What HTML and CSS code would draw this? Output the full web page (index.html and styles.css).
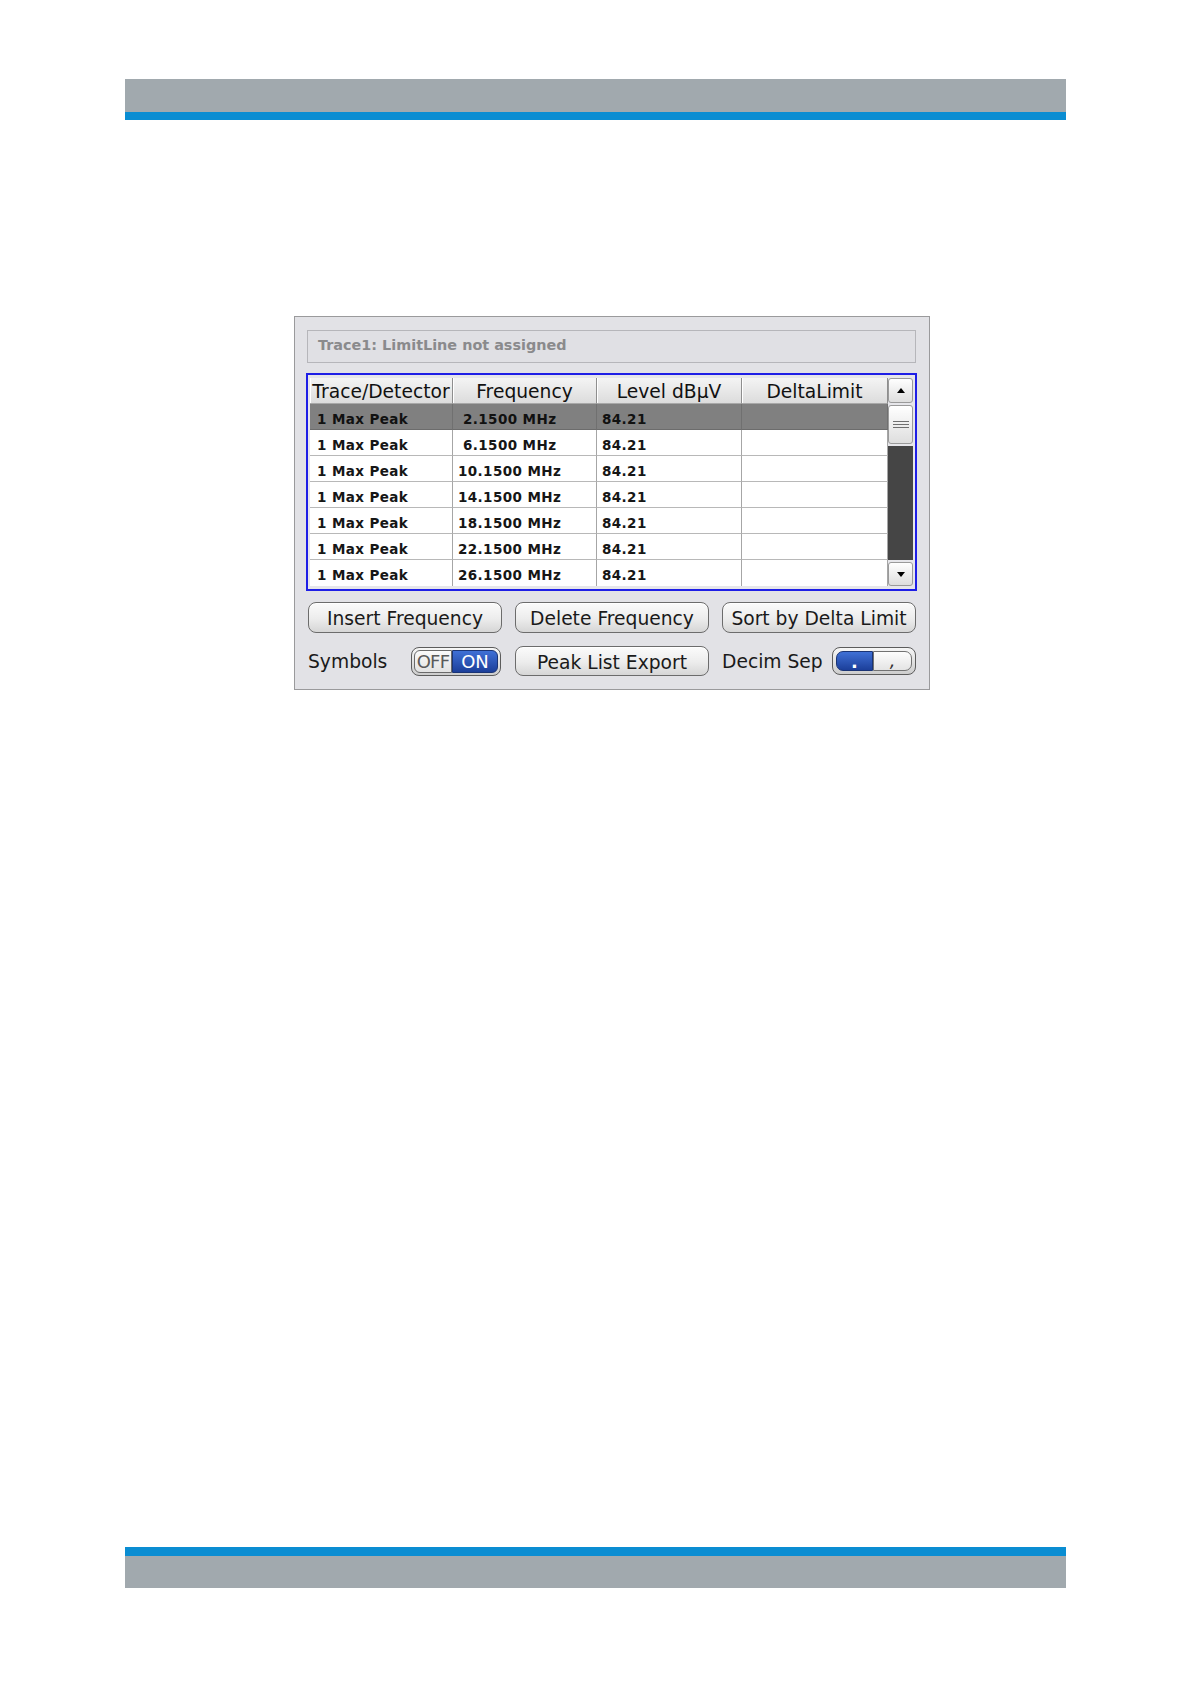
FILE: index.html
```html
<!DOCTYPE html>
<html lang="en">
<head>
    <meta charset="UTF-8">
    <title>Peak List</title>
    <link rel="stylesheet" href="styles.css">
</head>
<body>
    <div class="page">
        <div class="band band-top">
            <div class="band-grey"></div>
            <div class="band-blue"></div>
        </div>

        <div class="dialog">
            <div class="info">Trace1: LimitLine not assigned</div>

            <div class="list-frame">
                <div class="table">
                    <div class="th">Trace/Detector</div>
                    <div class="th">Frequency</div>
                    <div class="th">Level dBµV</div>
                    <div class="th">DeltaLimit</div>

                    <div class="td sel">1 Max Peak</div>
                    <div class="td sel freq-short">2.1500 MHz</div>
                    <div class="td sel lvl">84.21</div>
                    <div class="td sel"></div>

                    <div class="td">1 Max Peak</div>
                    <div class="td freq-short">6.1500 MHz</div>
                    <div class="td lvl">84.21</div>
                    <div class="td"></div>

                    <div class="td">1 Max Peak</div>
                    <div class="td freq">10.1500 MHz</div>
                    <div class="td lvl">84.21</div>
                    <div class="td"></div>

                    <div class="td">1 Max Peak</div>
                    <div class="td freq">14.1500 MHz</div>
                    <div class="td lvl">84.21</div>
                    <div class="td"></div>

                    <div class="td">1 Max Peak</div>
                    <div class="td freq">18.1500 MHz</div>
                    <div class="td lvl">84.21</div>
                    <div class="td"></div>

                    <div class="td">1 Max Peak</div>
                    <div class="td freq">22.1500 MHz</div>
                    <div class="td lvl">84.21</div>
                    <div class="td"></div>

                    <div class="td last">1 Max Peak</div>
                    <div class="td last freq">26.1500 MHz</div>
                    <div class="td last lvl">84.21</div>
                    <div class="td last"></div>
                </div>

                <div class="scrollbar">
                    <div class="sb-btn">
                        <svg width="8" height="5" viewBox="0 0 8 5"><path d="M0 5 L4 0 L8 5 Z" fill="#000"/></svg>
                    </div>
                    <div class="sb-thumb">
                        <svg width="16" height="9" viewBox="0 0 16 9"><path d="M0 1.5 H16 M0 4.5 H16 M0 7.5 H16" stroke="#707070" stroke-width="1"/></svg>
                    </div>
                    <div class="sb-track"></div>
                    <div class="sb-btn down">
                        <svg width="8" height="5" viewBox="0 0 8 5"><path d="M0 0 L8 0 L4 5 Z" fill="#000"/></svg>
                    </div>
                </div>
            </div>

            <div class="controls">
                <button class="btn">Insert Frequency</button>
                <button class="btn">Delete Frequency</button>
                <button class="btn">Sort by Delta Limit</button>

                <div class="field">
                    <span class="label">Symbols</span>
                    <div class="toggle onoff">
                        <span class="seg off">OFF</span>
                        <span class="seg on">ON</span>
                    </div>
                </div>
                <button class="btn short">Peak List Export</button>
                <div class="field">
                    <span class="label">Decim Sep</span>
                    <div class="toggle sep">
                        <span class="seg dot">.</span>
                        <span class="seg comma">,</span>
                    </div>
                </div>
            </div>
        </div>

        <div class="band band-bottom">
            <div class="band-blue"></div>
            <div class="band-grey"></div>
        </div>
    </div>
</body>
</html>
```

FILE: styles.css
```css
body, html {
    margin: 0;
    padding: 0;
    background: #fff;
    font-family: "DejaVu Sans", Verdana, sans-serif;
    color: #161616;
}
.page {
    display: flex;
    flex-direction: column;
    padding-top: 79px;
}
.band {
    margin-left: 125px;
    width: 941px;
}
.band-grey { background: #a1a9ae; }
.band-blue { background: #0a8dd2; }
.band-top .band-grey { height: 33px; }
.band-top .band-blue { height: 8px; }
.band-bottom { margin-top: 857px; }
.band-bottom .band-blue { height: 9px; }
.band-bottom .band-grey { height: 32px; }

/* dialog */
.dialog {
    margin: 196px 0 0 294px;
    width: 636px;
    box-sizing: border-box;
    padding: 13px 12px 13px 11px;
    background: #e2e2e6;
    border: 1px solid #9a9a9c;
}
.info {
    margin: 0 1px 10px 1px;
    height: 33px;
    box-sizing: border-box;
    border: 1px solid #b6b6ba;
    background: #e0e0e4;
    padding-left: 10px;
    line-height: 29px;
    font-size: 14.4px;
    font-weight: bold;
    color: #8a8a8c;
}

/* peak table */
.list-frame {
    display: flex;
    border: 2px solid #1e1ee6;
    padding: 3px 2px;
    background: #e6e6ea;
}
.table {
    display: grid;
    grid-template-columns: 143px 144px 145px 146px;
    width: 578px;
    background: #fff;
}
.th, .td {
    height: 26px;
    box-sizing: border-box;
    white-space: nowrap;
    overflow: visible;
}
.th {
    font-size: 18.7px;
    line-height: 24px;
    padding-top: 2px;
    text-align: center;
    background: linear-gradient(#f4f4f4, #dcdcdc);
    border-right: 1px solid #8e8e8e;
    border-bottom: 1px solid #a8a8a8;
    box-shadow: inset 1px 0 #fff;
    color: #111;
}
.td {
    font-size: 13.5px;
    font-weight: bold;
    letter-spacing: 0.4px;
    line-height: 22px;
    padding-top: 4px;
    padding-left: 7px;
    border-right: 1px solid #a6a6a6;
    border-bottom: 1px solid #b8b8b8;
}
.td.freq-short { padding-left: 10px; }
.td.freq { padding-left: 5px; }
.td.lvl { padding-left: 5px; }
.td.last { border-bottom: none; }
.td.sel {
    background: #808080;
    border-right-color: #707070;
    border-bottom-color: #6c6c6c;
    color: #111;
}

.scrollbar {
    width: 25px;
    display: flex;
    flex-direction: column;
    gap: 2px;
}
.sb-btn, .sb-thumb {
    box-sizing: border-box;
    border: 1px solid #9a9a9a;
    border-radius: 3px;
    background: linear-gradient(#ffffff, #dedede);
    display: flex;
    align-items: center;
    justify-content: center;
}
.sb-btn { height: 25px; }
.sb-btn.down { height: 24px; }
.sb-thumb { height: 39px; }
.sb-track {
    flex: 1;
    background: #454545;
}

/* buttons and toggles */
.controls {
    display: grid;
    grid-template-columns: 1fr 1fr 1fr;
    column-gap: 13px;
    row-gap: 13px;
    margin: 11px 1px 0 2px;
}
.btn {
    height: 31px;
    box-sizing: border-box;
    border: 1px solid #6c6c6c;
    border-radius: 8px;
    background: linear-gradient(#fbfbfb, #ececec 55%, #d6d6d6);
    box-shadow: inset 0 1px #fff;
    font-family: "DejaVu Sans", Verdana, sans-serif;
    font-size: 18.7px;
    color: #1a1a1a;
    padding: 2px 0 0 0;
    cursor: pointer;
}
.btn.short { height: 30px; }
.field {
    display: flex;
    align-items: center;
    justify-content: space-between;
}
.label {
    font-size: 18.7px;
    color: #1a1a1a;
}
.toggle {
    display: flex;
    box-sizing: border-box;
    border: 1px solid #5c5c5c;
    border-radius: 8px;
    background: linear-gradient(#f6f6f6, #cdcdcd);
}
.onoff {
    width: 90px;
    height: 29px;
    padding: 2px;
    margin-right: 1px;
}
.sep {
    width: 84px;
    height: 28px;
    padding: 3px;
}
.seg {
    box-sizing: border-box;
    display: flex;
    justify-content: center;
    font-size: 18px;
}
.seg.off {
    width: 38px;
    align-items: center;
    border: 1px solid #6a6a6a;
    border-radius: 6px 0 0 6px;
    background: linear-gradient(#fafafa, #e2e2e2);
    color: #5a5a5a;
    letter-spacing: -0.8px;
}
.seg.on {
    flex: 1;
    align-items: center;
    border: 1px solid #1a3475;
    border-radius: 0 6px 6px 0;
    background: linear-gradient(#3f70d6, #1c3f9a);
    color: #fff;
}
.seg.dot {
    width: 37px;
    align-items: flex-end;
    border: 1px solid #1a3475;
    border-radius: 7px 0 0 7px;
    background: linear-gradient(#3f70d6, #1c3f9a);
    color: #fff;
    font-weight: bold;
    line-height: 16px;
}
.seg.comma {
    flex: 1;
    align-items: flex-end;
    border: 1px solid #727272;
    border-radius: 0 7px 7px 0;
    background: linear-gradient(#fdfdfd, #e4e4e4);
    color: #333;
    line-height: 18px;
    font-style: italic;
}
```
